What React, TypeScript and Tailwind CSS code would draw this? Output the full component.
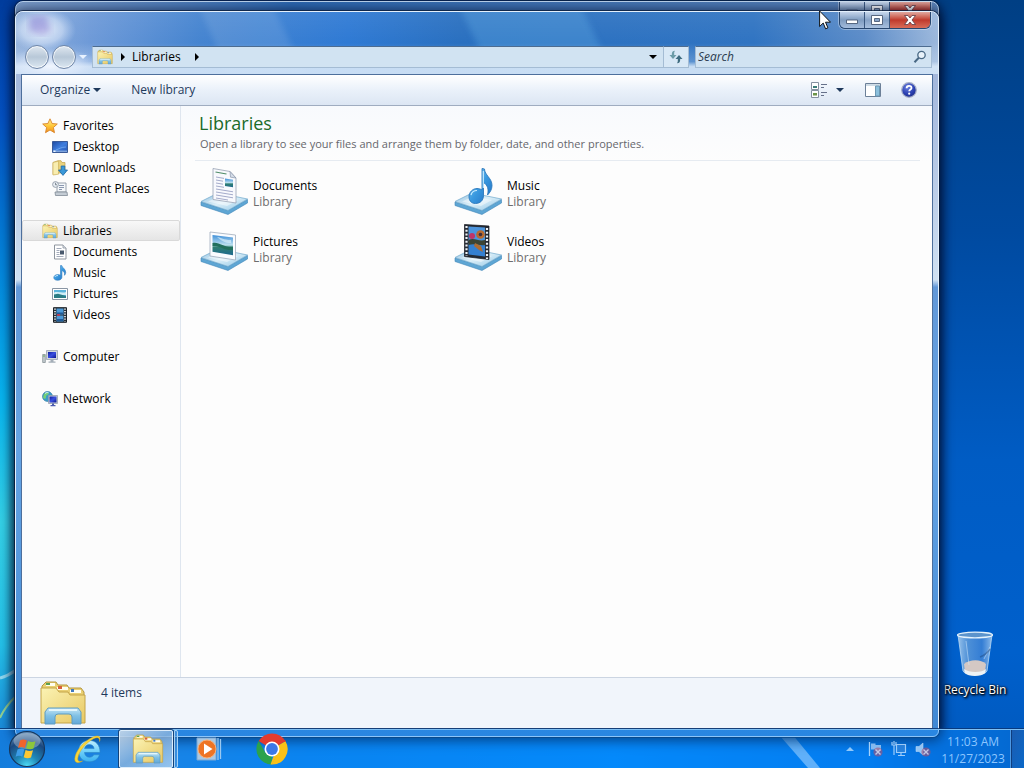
import React, { useState } from "react";

type IconProps = { className?: string };

type NavEntry = {
  label: string;
  icon: React.FC<IconProps>;
  child?: boolean;
};

type LibraryEntry = {
  label: string;
  icon: React.FC<IconProps>;
};

// gradients shared by every icon on the page
const SharedGradients = () => (
  <svg width="0" height="0" className="absolute" aria-hidden="true">
    <defs>
      <linearGradient id="g-folder" x1="0" y1="0" x2="1" y2="1">
        <stop offset="0" stopColor="#fbf3b4" />
        <stop offset="1" stopColor="#e8c862" />
      </linearGradient>
      <linearGradient id="g-stand" x1="0" y1="0" x2="0" y2="1">
        <stop offset="0" stopColor="#c4e6f6" />
        <stop offset="0.5" stopColor="#7fc0e4" />
        <stop offset="1" stopColor="#63a8d8" />
      </linearGradient>
      <linearGradient id="g-plate" x1="0" y1="0" x2="1" y2="1">
        <stop offset="0" stopColor="#8fbfe0" />
        <stop offset="0.5" stopColor="#dceff8" />
        <stop offset="1" stopColor="#8cc4e6" />
      </linearGradient>
      <linearGradient id="g-note" x1="0" y1="0" x2="1" y2="1">
        <stop offset="0" stopColor="#9ad6f8" />
        <stop offset="0.5" stopColor="#3a9ae0" />
        <stop offset="1" stopColor="#1f6cc0" />
      </linearGradient>
      <linearGradient id="g-photo" x1="0" y1="0" x2="0" y2="1">
        <stop offset="0" stopColor="#3f8fd8" />
        <stop offset="0.5" stopColor="#bfe2f0" />
        <stop offset="0.6" stopColor="#2f7f70" />
        <stop offset="1" stopColor="#1f6a90" />
      </linearGradient>
      <linearGradient id="g-screen" x1="0" y1="0" x2="1" y2="1">
        <stop offset="0" stopColor="#0c1ca0" />
        <stop offset="0.5" stopColor="#3a50e0" />
        <stop offset="1" stopColor="#0a1490" />
      </linearGradient>
      <linearGradient id="g-desk" x1="0" y1="0" x2="1" y2="1">
        <stop offset="0" stopColor="#1c48a0" />
        <stop offset="0.5" stopColor="#3f7ede" />
        <stop offset="1" stopColor="#2454b4" />
      </linearGradient>
      <linearGradient id="g-star" x1="0" y1="0" x2="0" y2="1">
        <stop offset="0" stopColor="#fff3a0" />
        <stop offset="0.5" stopColor="#ffc93a" />
        <stop offset="1" stopColor="#f09020" />
      </linearGradient>
      <radialGradient id="g-help" cx="0.4" cy="0.3" r="0.8">
        <stop offset="0" stopColor="#6a80e0" />
        <stop offset="0.6" stopColor="#2a3fb0" />
        <stop offset="1" stopColor="#1c2a80" />
      </radialGradient>
      <radialGradient id="g-orb" cx="0.5" cy="1" r="0.95">
        <stop offset="0" stopColor="#4fe0f8" />
        <stop offset="0.35" stopColor="#1f88b8" />
        <stop offset="0.75" stopColor="#1a4880" />
        <stop offset="1" stopColor="#5f88b0" />
      </radialGradient>
      <linearGradient id="g-ie" x1="0" y1="0" x2="0" y2="1">
        <stop offset="0" stopColor="#c4f0ff" />
        <stop offset="0.5" stopColor="#6fd0fa" />
        <stop offset="1" stopColor="#3ab0f0" />
      </linearGradient>
      <linearGradient id="g-bin" x1="0" y1="0" x2="1" y2="0">
        <stop offset="0" stopColor="#b4d4f0" stopOpacity="0.85" />
        <stop offset="0.3" stopColor="#6ea4dc" stopOpacity="0.7" />
        <stop offset="0.7" stopColor="#4a8ad8" stopOpacity="0.7" />
        <stop offset="1" stopColor="#a8ccf0" stopOpacity="0.85" />
      </linearGradient>
    </defs>
  </svg>
);

const LibrariesIcon: React.FC<IconProps> = ({ className }) => (
  <svg viewBox="0 0 48 46" className={className} aria-hidden="true">
    <path d="M3 6l4-4h10l2 3h9l2 3h12l3 4v30H3z" fill="#e9cf72" stroke="#b59740" />
    <path d="M7 3h9v3H7zM18 7h11v3H18zM31 10h11v3H31z" fill="#fffef0" />
    <path d="M7 3h4v2H7z" fill="#5aa050" />
    <path d="M19 6h4v3h-4z" fill="#d8603a" />
    <path d="M32 9h3v3h-3z" fill="#3f78c0" />
    <path d="M2 8h15l3 4h9l2 3h15v28H2z" fill="url(#g-folder)" stroke="#c4a448" />
    <path
      d="M9 28h30l3 4v12h-9v-7q0-3-3-3H19q-3 0-3 3v7H6V32z"
      fill="url(#g-stand)"
      stroke="#5f9cc0"
    />
    <path d="M10 30h28" stroke="#e4f6fc" strokeWidth="2" />
  </svg>
);

const StarIcon: React.FC<IconProps> = ({ className }) => (
  <svg viewBox="0 0 16 16" className={className} aria-hidden="true">
    <path
      d="M8 .8l2.1 4.7 5.2.5-3.9 3.5 1.1 5.2L8 12l-4.5 2.7 1.1-5.2L.7 6l5.2-.5z"
      fill="url(#g-star)"
      stroke="#d8842a"
      strokeWidth="0.9"
      strokeLinejoin="round"
    />
  </svg>
);

const DesktopIcon: React.FC<IconProps> = ({ className }) => (
  <svg viewBox="0 0 16 16" className={className} aria-hidden="true">
    <path d="M.5 2.5h15v11H.5z" fill="url(#g-desk)" stroke="#3a5a98" />
    <path d="M1 11.5h14v1.5H1z" fill="#7fa4dc" />
    <path d="M1.5 11.5h2v1.5h-2z" fill="#e8f4ff" />
    <path d="M4 11c3-1 5-3 10-3" stroke="#7fb4f4" strokeWidth="0.7" fill="none" />
  </svg>
);

const DownloadsIcon: React.FC<IconProps> = ({ className }) => (
  <svg viewBox="0 0 16 16" className={className} aria-hidden="true">
    <path d="M1 2.5L6 .7h3l1 1.8h3V13H6l-5 1.5z" fill="#ead27c" stroke="#c0a04a" strokeWidth="0.7" />
    <path d="M1 2.5l5.5-1.3v13L1 15z" fill="#f8edb0" stroke="#c9ab52" strokeWidth="0.6" />
    <path d="M9.2 6h3.6v4h2.7L11 15.4 6.500 10h2.700z" fill="#3a98d8" stroke="#1c68a8" strokeWidth="0.8" />
  </svg>
);

const RecentIcon: React.FC<IconProps> = ({ className }) => (
  <svg viewBox="0 0 16 16" className={className} aria-hidden="true">
    <path d="M5 2h9v9H5z" fill="#f4f7fa" stroke="#8e99a6" strokeWidth="0.9" />
    <path d="M7 4.5h5M7 6.5h5M7 8.5h3" stroke="#8a98b0" />
    <path d="M3 11h12l.5 3.5h-12z" fill="#c4ccd4" stroke="#808a96" strokeWidth="0.8" />
    <circle cx="3.5" cy="3.5" r="2.9" fill="#e8eef4" stroke="#8e99a6" strokeWidth="0.9" />
    <path d="M3.5 1.8v2h1.5" stroke="#55606c" strokeWidth="0.7" fill="none" />
  </svg>
);

const DocumentIcon: React.FC<IconProps> = ({ className }) => (
  <svg viewBox="0 0 16 16" className={className} aria-hidden="true">
    <path d="M2.5 1h8.500l3 3v11H2.500z" fill="#fff" stroke="#8e959e" />
    <path d="M11 1v3h3" fill="#dce2ea" stroke="#8e959e" strokeWidth="0.8" />
    <path d="M4.500 4.500h5M4.500 6.500h3M4.500 8.500h3M4.500 10.500h3M4.500 12.500h7" stroke="#8c96a8" strokeWidth="0.8" />
    <path d="M8 6.500h4v4H8z" fill="#48586c" />
  </svg>
);

const MusicIcon: React.FC<IconProps> = ({ className }) => (
  <svg viewBox="0 0 16 16" className={className} aria-hidden="true">
    <path
      d="M8.500.5h1.200c.6 2.500 4 3.500 4 6.800 0 1.500-.6 2.400-1.200 3 .3-2.600-.6-4-2.600-4.800v6.700c0 1.800-1.800 3.100-4.200 3.100S1.800 14.300 1.800 12.500s1.900-2.900 4-2.900c1 0 1.900.2 2.700.7z"
      fill="url(#g-note)"
      stroke="#2f7cc0"
      strokeWidth="0.6"
    />
    <path d="M3 11.800c.6-1 1.800-1.300 3-1.200" stroke="#d8f2ff" fill="none" />
  </svg>
);

const PictureIcon: React.FC<IconProps> = ({ className }) => (
  <svg viewBox="0 0 16 16" className={className} aria-hidden="true">
    <path d="M.5 2.500h15v11H.5z" fill="#fff" stroke="#8a96a4" />
    <path d="M2 4h12v8H2z" fill="#5ab4dc" />
    <path d="M2 6.500c4-1.500 8 1 12-.5v3H2z" fill="#d0eef6" />
    <path d="M2 8.500l4-.8 8 2.300v2H2z" fill="#2a7c84" />
  </svg>
);

const VideoIcon: React.FC<IconProps> = ({ className }) => (
  <svg viewBox="0 0 16 16" className={className} aria-hidden="true">
    <path d="M1.500.7h13v14.600h-13z" fill="#283038" stroke="#1c2228" />
    <path d="M4.500 1.500h7v6h-7zM4.500 8.500h7v6h-7z" fill="#4c9ad8" />
    <path d="M5 5.500h6v1.800H5zM5 12h6v2H5z" fill="#1f5a98" />
    <path d="M5 7h3v2H5z" fill="#b0405a" />
    <path d="M3 1.500v13M13 1.500v13" stroke="#f0f4f8" strokeWidth="1.6" strokeDasharray="1.3 1.2" />
  </svg>
);

const ComputerIcon: React.FC<IconProps> = ({ className }) => (
  <svg viewBox="0 0 16 16" className={className} aria-hidden="true">
    <path d="M.7 5.500h2.600v8H.7z" fill="#c4ccd0" stroke="#7c868c" strokeWidth="0.7" />
    <path d="M1.200 7h1.600" stroke="#58a848" />
    <path d="M4.500 1.500h11v9h-11z" fill="#d0d6de" stroke="#98a2ae" strokeWidth="0.8" />
    <path d="M6 3h8v6H6z" fill="url(#g-screen)" />
    <path d="M8.500 11h3v1.500h2v1.200h-7v-1.200h2z" fill="#a4aeb8" />
  </svg>
);

const NetworkIcon: React.FC<IconProps> = ({ className }) => (
  <svg viewBox="0 0 16 16" className={className} aria-hidden="true">
    <circle cx="5.5" cy="5.5" r="5" fill="#3c9cc8" stroke="#2874a0" strokeWidth="0.6" />
    <path d="M2 3c2-2 4-1.500 5-.5-1 2-3 1-3 3.500S2 8 1 6.500z" fill="#74d078" />
    <path d="M3 2.500c1-1 2.500-1.200 3.500-.8" stroke="#e8fcff" fill="none" />
    <path d="M6.500 4.500h9v8h-9z" fill="#c8d0dc" stroke="#8e98a8" strokeWidth="0.7" />
    <path d="M7.500 5.500h7v6h-7z" fill="url(#g-screen)" />
    <path d="M10 12.500h2v1.500h1.500v1.200h-5V14H10z" fill="#4c5cb0" />
  </svg>
);

const Plate = () => (
  <>
    <path d="M1 35v3.500l27 9L47.500 36v-3.500L28 43.500z" fill="#5ea6d4" stroke="#3f86b8" strokeWidth="0.6" />
    <path d="M1 34.500L18 26l29.500 6L28 43.500z" fill="url(#g-plate)" stroke="#6fa8cc" strokeWidth="0.7" />
    <path d="M8 34.500L20 29l18 4-11 6z" fill="#fff" opacity="0.45" />
  </>
);

const DocumentsLibraryIcon: React.FC<IconProps> = ({ className }) => (
  <svg viewBox="0 1 48 48" className={className} aria-hidden="true">
    <Plate />
    <path d="M13 1.500l17 3 6 6.500v25l-23-3.500z" fill="#f8f9fd" stroke="#98a2b4" strokeWidth="0.8" />
    <path d="M30 4.500l6 6.500-5.500-.8z" fill="#d4dce8" stroke="#8c98ac" strokeWidth="0.7" />
    <path d="M15.500 5l11 2" stroke="#4f8c68" strokeWidth="1.2" />
    <path
      d="M16 10l8 1.400M16 13l7 1.200M16 16l7 1.200M16 19l8 1.300M16 22l17 2.800M16 25l17 2.800M16 28l17 2.800M16 31l12 2"
      stroke="#9aa2c4"
      strokeWidth="0.9"
    />
    <path d="M25 11.500l8 1.300v7.500l-8-1.300z" fill="url(#g-photo)" />
  </svg>
);

const MusicLibraryIcon: React.FC<IconProps> = ({ className }) => (
  <svg viewBox="0 1 48 48" className={className} aria-hidden="true">
    <Plate />
    <path
      d="M28 1.500l2.500.5c0 6 7.500 9 7.500 16.500 0 4-2 7-4.500 9.500 1.500-6 0-10-4-12.500v13c0 5-3.500 8-8 8s-6.500-3-6.500-7 3.500-8 8-8c2 0 3.500.5 5 1.500z"
      fill="url(#g-note)"
      stroke="#2b78bc"
      strokeWidth="0.9"
    />
    <path d="M17 28c.8-3 3-4.500 6-4.500M29.300 4v17" stroke="#c8ecff" strokeWidth="1.2" fill="none" />
  </svg>
);

const PicturesLibraryIcon: React.FC<IconProps> = ({ className }) => (
  <svg viewBox="0 1 48 48" className={className} aria-hidden="true">
    <Plate />
    <path d="M10 9l25.500 3v25L10 33z" fill="#fafcff" stroke="#a0acbc" strokeWidth="0.8" />
    <path d="M12.500 12l20.500 2.600v17.600l-20.500-3.400z" fill="url(#g-photo)" />
    <path d="M12.500 20c6-2 12 5 20.500 4v3c-8 1-14-5-20.500-4z" fill="#22705c" />
    <path d="M17 14c5 .5 6 3 14 3v3c-6 0-9-2-14-6z" fill="#d6eefa" opacity="0.7" />
  </svg>
);

const VideosLibraryIcon: React.FC<IconProps> = ({ className }) => (
  <svg viewBox="0 1 48 48" className={className} aria-hidden="true">
    <Plate />
    <path d="M10.500 1.500L35 3v33.500l-24.500-3z" fill="#262b34" stroke="#12161c" strokeWidth="0.7" />
    <path d="M14.500 3.500L31 4.500v14.800l-16.500-1z" fill="#4c94dc" />
    <path d="M14.500 20L31 21v12.500l-16.500-2z" fill="#3580d0" />
    <path d="M12.500 3v30M33 5v31" stroke="#eef2f6" strokeWidth="2.2" strokeDasharray="2 1.7" />
    <circle cx="18" cy="13" r="3" fill="#c03468" />
    <circle cx="26.5" cy="11.5" r="4.3" fill="#b86a30" />
    <circle cx="26.5" cy="11.5" r="1.8" fill="#40303c" />
    <path d="M14.500 17c6-3 10 2 16.500 0v5c-6 1-10-2-16.500 0z" fill="#3c4434" />
    <path d="M21 20l6 3 2 6-4-2-5-4z" fill="#ac6c34" />
  </svg>
);

const ChangeViewIcon: React.FC<IconProps> = ({ className }) => (
  <svg viewBox="0 0 18 16" className={className} aria-hidden="true">
    <path d="M1.500.5h7v7h-7zM1.500 8.500h7v7h-7z" fill="#fff" stroke="#8490a0" />
    <path d="M3 4h4v2H3z" fill="#3a7c78" />
    <path d="M3 11h4v2.500H3z" fill="#6c9448" />
    <path d="M11 2.500h6M11 5.500h3M11 10.500h6M11 13.500h3" stroke="#66718a" />
  </svg>
);

const PreviewPaneIcon: React.FC<IconProps> = ({ className }) => (
  <svg viewBox="0 0 16 14" className={className} aria-hidden="true">
    <path d="M.5.5h15v13H.5z" fill="#fff" stroke="#6c8098" />
    <path d="M1 2h14" stroke="#9eb8cc" />
    <path d="M10.500 3h4v10h-4z" fill="#8cc0dc" stroke="#6c98b4" />
  </svg>
);

const HelpIcon: React.FC<IconProps> = ({ className }) => (
  <svg viewBox="0 0 16 16" className={className} aria-hidden="true">
    <circle cx="8" cy="8" r="7.3" fill="url(#g-help)" stroke="#a8b0c8" strokeWidth="1.2" />
    <path d="M5.600 6.200c0-3.200 4.900-3.100 4.900-.3 0 1.600-2.300 1.700-2.300 3.400" stroke="#fff" strokeWidth="1.8" fill="none" />
    <circle cx="8.2" cy="11.7" r="1.1" fill="#fff" />
  </svg>
);

const SearchIcon: React.FC<IconProps> = ({ className }) => (
  <svg viewBox="0 0 14 14" className={className} aria-hidden="true">
    <circle cx="8.5" cy="5" r="3.7" fill="#e8f2fa" stroke="#486884" strokeWidth="1.3" />
    <path d="M5.800 7.800L1.500 12.300" stroke="#486884" strokeWidth="2" />
  </svg>
);

const RefreshIcon: React.FC<IconProps> = ({ className }) => (
  <svg viewBox="0 0 16 14" className={className} aria-hidden="true">
    <path d="M7 .8C4.500.8 3.800 2 3.800 5H1.500L5 9l3.500-4H6.200C6.200 3 6 2 7 .8z" fill="#6c9ca8" />
    <path d="M9 13.200c2.500 0 3.200-1.200 3.200-4.200h2.300L11 5 7.500 9h2.300c0 2 .2 3-.8 4.200z" fill="#3f6c80" />
  </svg>
);

const DownArrow: React.FC<IconProps> = ({ className }) => (
  <svg viewBox="0 0 8 4" className={className} aria-hidden="true">
    <path d="M0 0h8L4 4z" fill="currentColor" />
  </svg>
);

const RightArrow: React.FC<IconProps> = ({ className }) => (
  <svg viewBox="0 0 4 8" className={className} aria-hidden="true">
    <path d="M0 0v8l4-4z" fill="currentColor" />
  </svg>
);

const StartOrb: React.FC<IconProps> = ({ className }) => (
  <svg viewBox="0 0 38 38" className={className} aria-hidden="true">
    <circle cx="19" cy="19" r="17.5" fill="url(#g-orb)" stroke="#16365c" strokeWidth="1.2" />
    <ellipse cx="19" cy="11" rx="13.5" ry="8" fill="#fff" opacity="0.3" />
    <path d="M12 10.500c2.500-1.500 4.500-1.200 6.800 0l-2 7.500c-2.500-1.300-4.300-1.200-6.800 0z" fill="#f0642c" />
    <path d="M20 11c2.500 1.200 5 1.300 7.500.2l-2 7.300c-2.500 1.200-4.800 1-7.400-.2z" fill="#8cc63c" />
    <path d="M9.500 19.500c2.500-1.200 4.500-1.200 6.800 0l-2 7.200c-2.300-1.300-4.300-1.200-6.700 0z" fill="#3c9ce8" />
    <path d="M17.600 20c2.600 1.300 5 1.300 7.400.2l-2 7.300c-2.400 1-4.800 1-7.300-.3z" fill="#fcc834" />
  </svg>
);

const ExplorerE: React.FC<IconProps> = ({ className }) => (
  <svg viewBox="0 0 32 32" className={className} aria-hidden="true">
    <path
      d="M28 19.500H12.500c.3 3 2.300 4.700 5 4.700 2 0 3.500-.8 4.300-2.400h5.700c-1.500 4.500-5.300 7-10.200 7-6.500 0-10.700-4.300-10.700-10.600S10.900 7.500 17.400 7.500 28.200 12 28 19.500zM12.600 15.600h9.500c-.3-2.600-2.200-4-4.700-4s-4.300 1.500-4.800 4z"
      fill="url(#g-ie)"
      stroke="#2a84c4"
      strokeWidth="0.6"
    />
    <path
      d="M27.500 8.500C29.500 3 26 1.800 20.500 4.300 12 8 3 18.500 2.800 25.800 2.700 30 6 30.800 10.500 28c-3.200 1-5.200.3-4.700-3C6.700 18.500 14 9.500 21.500 5.700c4-2 6.700-1.200 6 2.800z"
      fill="#f7d63c"
      stroke="#d8a820"
      strokeWidth="0.5"
    />
  </svg>
);

const MediaPlayerIcon: React.FC<IconProps> = ({ className }) => (
  <svg viewBox="0 0 26 24" className={className} aria-hidden="true">
    <path d="M1 1h19v22H1z" fill="#a8c8e4" stroke="#7aa8d4" />
    <path d="M22 1v22M24.500 2v20" stroke="#9ac8f0" strokeWidth="1.3" />
    <circle cx="11" cy="12" r="9" fill="#ee7424" stroke="#f8b078" />
    <path d="M8 6.500l8.500 5.500L8 17.500z" fill="#fff" />
  </svg>
);

const ChromeIcon: React.FC<IconProps> = ({ className }) => (
  <svg viewBox="0 0 32 32" className={className} aria-hidden="true">
    <path d="M16 16L2.600 8A15.600 15.600 0 0 1 29.500 8.200z" fill="#e33b2e" />
    <path d="M16 16L29.500 8.200A15.600 15.600 0 0 1 15.700 31.600L22 19z" fill="#fbc116" />
    <path d="M16 16l-.3 15.600A15.600 15.600 0 0 1 2.600 8l7 12z" fill="#2ba24c" />
    <path d="M16 8.700h13.800a15.600 15.600 0 0 0-.8-1.600z" fill="#e33b2e" />
    <path d="M22.300 19.700L16 31.600l-1.500 0 3-8.400z" fill="#fbc116" />
    <circle cx="16" cy="16" r="7.5" fill="#fff" />
    <circle cx="16" cy="16" r="5.9" fill="#3b78e7" />
  </svg>
);

const RecycleBinIcon: React.FC<IconProps> = ({ className }) => (
  <svg viewBox="0 0 38 46" className={className} aria-hidden="true">
    <path d="M2 4l5 36c2 5 22 5 24 0l5-36z" fill="url(#g-bin)" stroke="#b8d8f4" strokeWidth="0.8" />
    <path d="M8 33c6-5 17-5 22 0l-1 8c-4 4-17 4-20 0z" fill="#d4c8c4" />
    <path d="M8 38c5 4 18 4 22 0l-.7 4c-4 4-17 4-20.600 0z" fill="#eef2f4" />
    <path d="M10 10l3 24M28 28l6-12" stroke="#d8ecfc" opacity="0.5" />
    <path d="M24 26q6-2 10-8" stroke="#204c84" strokeWidth="1.5" fill="none" opacity="0.5" />
    <ellipse cx="19" cy="4" rx="17.5" ry="2.8" fill="#5c94cc" stroke="#e4f2fc" strokeWidth="1.3" />
  </svg>
);

const RedX = () => (
  <>
    <circle cx="11" cy="11" r="4.6" fill="#d04858" opacity="0.6" />
    <path d="M8.500 8.500l5 5M13.500 8.500l-5 5" stroke="#f4dce4" strokeWidth="1.4" />
  </>
);

const ActionCenterIcon: React.FC<IconProps> = ({ className }) => (
  <svg viewBox="0 0 16 16" className={className} aria-hidden="true">
    <path d="M2.500 1v14" stroke="#cfe8ff" strokeWidth="1.3" />
    <path d="M4 2.500h4.500v1.500h5.500v6H8.500V8.500H4z" fill="#a4ccf4" />
    <RedX />
  </svg>
);

const NetworkTrayIcon: React.FC<IconProps> = ({ className }) => (
  <svg viewBox="0 0 16 16" className={className} aria-hidden="true">
    <path d="M5.500 3.500h9v8h-9z" fill="#2f84dc" stroke="#c4e2ff" strokeWidth="1.2" />
    <path d="M10 12v2M7 14.500h7M1 1v3h4V1M3 0v3M3 4v10" stroke="#c4e2ff" strokeWidth="1.2" fill="none" />
  </svg>
);

const VolumeIcon: React.FC<IconProps> = ({ className }) => (
  <svg viewBox="0 0 16 16" className={className} aria-hidden="true">
    <path d="M1 5.500h3L8 2v12l-4-3.500H1z" fill="#b8dafa" stroke="#d8ecff" strokeWidth="0.6" />
    <RedX />
  </svg>
);

const Wallpaper = () => (
  <svg viewBox="0 0 1024 768" preserveAspectRatio="none" className="absolute inset-0 size-full" aria-hidden="true">
    <defs>
      <linearGradient id="w-left" x1="0" y1="0" x2="0" y2="1">
        <stop offset="0" stopColor="#003c9c" />
        <stop offset="0.15" stopColor="#0450c0" />
        <stop offset="0.36" stopColor="#0488dc" />
        <stop offset="0.52" stopColor="#08b4ee" />
        <stop offset="0.68" stopColor="#34d0e6" />
        <stop offset="0.84" stopColor="#24c0e8" />
        <stop offset="0.95" stopColor="#1a8ad8" />
        <stop offset="1" stopColor="#1878d0" />
      </linearGradient>
      <linearGradient id="w-right" x1="0" y1="0" x2="0" y2="1">
        <stop offset="0" stopColor="#003f84" />
        <stop offset="0.3" stopColor="#004aa0" />
        <stop offset="0.6" stopColor="#005cc4" />
        <stop offset="0.85" stopColor="#0060cc" />
        <stop offset="1" stopColor="#0058bc" />
      </linearGradient>
      <linearGradient id="w-floor" x1="0" y1="0" x2="1" y2="0">
        <stop offset="0" stopColor="#1c78cc" />
        <stop offset="0.12" stopColor="#2a84d8" />
        <stop offset="0.3" stopColor="#0a84ee" />
        <stop offset="0.6" stopColor="#008cff" />
        <stop offset="0.85" stopColor="#0078ec" />
        <stop offset="0.92" stopColor="#0064d0" />
        <stop offset="1" stopColor="#0056b8" />
      </linearGradient>
    </defs>
    <rect width="512" height="768" fill="url(#w-left)" />
    <rect x="512" width="512" height="768" fill="url(#w-right)" />
    <rect y="729" width="1024" height="39" fill="url(#w-floor)" />
    <path d="M0 678q8-2 16-8" stroke="#c0ecf8" strokeWidth="3" fill="none" opacity="0.7" />
    <path d="M0 718q4-10 16-22" stroke="#b0e080" strokeWidth="2" fill="none" opacity="0.8" />
    <path d="M774 729l14 0 32 39h-12z" fill="#b4dcff" opacity="0.85" />
  </svg>
);

// streaked glass behind the title and address rows
const Glass = () => (
  <svg viewBox="0 0 922 62" preserveAspectRatio="none" className="absolute inset-0 size-full" aria-hidden="true">
    <defs>
      <linearGradient id="t-base" x1="0" y1="0" x2="1" y2="0">
        <stop offset="0" stopColor="#94b2dc" />
        <stop offset="0.08" stopColor="#6e9ad8" />
        <stop offset="0.2" stopColor="#4584d0" />
        <stop offset="0.36" stopColor="#2f7ad4" />
        <stop offset="0.48" stopColor="#2a70c0" />
        <stop offset="0.8" stopColor="#3074c2" />
        <stop offset="0.92" stopColor="#5c8cc8" />
        <stop offset="1" stopColor="#9cb8dc" />
      </linearGradient>
      <linearGradient id="t-fade" x1="0" y1="0" x2="0" y2="1">
        <stop offset="0" stopColor="#fff" stopOpacity="0.06" />
        <stop offset="0.5" stopColor="#fff" stopOpacity="0" />
        <stop offset="0.8" stopColor="#e4f0fc" stopOpacity="0.25" />
        <stop offset="0.88" stopColor="#d8e8f8" stopOpacity="0.9" />
        <stop offset="1" stopColor="#cfe2f6" stopOpacity="0.95" />
      </linearGradient>
      <radialGradient id="t-glow">
        <stop offset="0" stopColor="#f4f8ff" stopOpacity="0.9" />
        <stop offset="0.6" stopColor="#dce8fa" stopOpacity="0.6" />
        <stop offset="1" stopColor="#c4d8f4" stopOpacity="0" />
      </radialGradient>
      <filter id="t-soft">
        <feGaussianBlur stdDeviation="3" />
      </filter>
    </defs>
    <rect width="922" height="62" fill="url(#t-base)" />
    <path d="M182-8h74l38 80h-78z" fill="#fff" opacity="0.1" filter="url(#t-soft)" />
    <path d="M442-8h122l38 80H480z" fill="#5aa4e0" opacity="0.38" filter="url(#t-soft)" />
    <rect width="922" height="62" fill="url(#t-fade)" />
    <ellipse cx="26" cy="18" rx="34" ry="22" fill="url(#t-glow)" />
    <ellipse cx="34" cy="54" rx="52" ry="18" fill="url(#t-glow)" />
    <path d="M14 4h16l5 15-9 4-13-4z" fill="#8a84d4" opacity="0.6" filter="url(#t-soft)" />
  </svg>
);

const CaptionButtons = () => (
  <div className="relative flex h-[17px] overflow-hidden rounded-b-md border border-t-0 border-[#27466e] shadow-[0_0_0_1px_rgba(255,255,255,0.35)]">
    <button
      type="button"
      aria-label="Minimize"
      className="flex w-6 items-center justify-center bg-linear-to-b from-[#c4d4ea] via-[#7f9cc0] to-[#a4bcdc]"
    >
      <svg viewBox="0 0 12 6" className="mt-1 h-[6px] w-3" aria-hidden="true">
        <path d="M.5 1h11v3.500H.5z" fill="#fff" stroke="#4a5a74" strokeWidth="0.9" />
      </svg>
    </button>
    <button
      type="button"
      aria-label="Maximize"
      className="flex w-[26px] items-center justify-center border-x border-[#3a5880] bg-linear-to-b from-[#c8d8ec] via-[#86a2c6] to-[#a8c0de]"
    >
      <svg viewBox="0 0 12 10" className="h-[10px] w-3" aria-hidden="true">
        <path d="M.5.5h11v9H.5zM3.500 3.500v3h5v-3z" fill="#fff" fillRule="evenodd" stroke="#4a5a74" strokeWidth="0.9" />
      </svg>
    </button>
    <button
      type="button"
      aria-label="Close"
      className="flex w-10 items-center justify-center bg-linear-to-b from-[#e0a8a0] via-[#c0392c] to-[#d86c58]"
    >
      <svg viewBox="0 0 12 10" className="h-[10px] w-3" aria-hidden="true">
        <path d="M.5.5H4L6 3 8 .5h3.500L8 5l3.500 4.500H8L6 7 4 9.500H.5L4 5z" fill="#fff" stroke="#5c3a44" strokeWidth="0.8" />
      </svg>
    </button>
  </div>
);

const navGroups: NavEntry[][] = [
  [
    { label: "Favorites", icon: StarIcon },
    { label: "Desktop", icon: DesktopIcon, child: true },
    { label: "Downloads", icon: DownloadsIcon, child: true },
    { label: "Recent Places", icon: RecentIcon, child: true },
  ],
  [
    { label: "Libraries", icon: LibrariesIcon },
    { label: "Documents", icon: DocumentIcon, child: true },
    { label: "Music", icon: MusicIcon, child: true },
    { label: "Pictures", icon: PictureIcon, child: true },
    { label: "Videos", icon: VideoIcon, child: true },
  ],
  [{ label: "Computer", icon: ComputerIcon }],
  [{ label: "Network", icon: NetworkIcon }],
];

const libraries: LibraryEntry[] = [
  { label: "Documents", icon: DocumentsLibraryIcon },
  { label: "Music", icon: MusicLibraryIcon },
  { label: "Pictures", icon: PicturesLibraryIcon },
  { label: "Videos", icon: VideosLibraryIcon },
];

const AddressRow = () => {
  const [query, setQuery] = useState("");

  return (
    <div className="relative flex h-[22px] items-stretch">
      <div className="flex w-[70px] shrink-0 items-center gap-[3px] pl-[3px]">
        <button
          type="button"
          aria-label="Back"
          className="size-6 shrink-0 rounded-full border border-[#6f86a8] bg-linear-to-b from-[#dfe7f0] via-[#b8c8d8] to-[#dce8f2] shadow-[inset_0_0_0_1px_rgba(255,255,255,0.7)]"
        />
        <button
          type="button"
          aria-label="Forward"
          className="size-6 shrink-0 rounded-full border border-[#6f86a8] bg-linear-to-b from-[#dfe7f0] via-[#b8c8d8] to-[#dce8f2] shadow-[inset_0_0_0_1px_rgba(255,255,255,0.7)]"
        />
        <button type="button" aria-label="Recent pages" className="text-[#e8f2ff]">
          <DownArrow className="h-1 w-2" />
        </button>
      </div>
      <div className="flex min-w-0 flex-1 items-center border border-[#a4bcd4] border-t-[#4d6c90] bg-[#d1e3f2] pr-[6px] pl-1">
        <LibrariesIcon className="size-4 shrink-0" />
        <RightArrow className="ml-2 h-2 w-1 shrink-0" />
        <a href="#libraries" className="ml-[7px] font-medium text-black">
          Libraries
        </a>
        <RightArrow className="ml-[14px] h-2 w-1 shrink-0" />
        <button type="button" aria-label="Previous locations" className="ml-auto">
          <DownArrow className="h-1 w-2" />
        </button>
      </div>
      <button
        type="button"
        aria-label="Refresh"
        className="flex w-[25px] shrink-0 items-center justify-center border border-l-0 border-[#a4bcd4] border-t-[#4d6c90] bg-[#d8e8f6]"
      >
        <RefreshIcon className="h-[14px] w-4" />
      </button>
      <div className="ml-[6px] flex w-[237px] shrink-0 items-center border border-[#a4bcd4] border-t-[#4d6c90] bg-[#d1e3f2] pr-1">
        <input
          type="text"
          aria-label="Search"
          placeholder="Search"
          value={query}
          onChange={(event) => setQuery(event.target.value)}
          className="min-w-0 flex-1 bg-transparent px-[2px] italic outline-none placeholder:text-[#2c3c50]"
        />
        <button type="button" aria-label="Start search">
          <SearchIcon className="size-[14px]" />
        </button>
      </div>
    </div>
  );
};

const Toolbar = () => (
  <div className="flex h-[31px] shrink-0 items-center border-b border-[#9facc0] bg-linear-to-b from-white via-[#eaf1fa] via-50% to-[#dce6f3] pr-[15px] pl-[18px] text-[#1e395b]">
    <button type="button" className="flex items-center gap-[3px]">
      Organize
      <DownArrow className="h-1 w-2" />
    </button>
    <button type="button" className="ml-[30px]">
      New library
    </button>
    <div className="ml-auto flex items-center">
      <button type="button" aria-label="Change your view">
        <ChangeViewIcon className="h-4 w-[18px]" />
      </button>
      <button type="button" aria-label="More view options" className="ml-2">
        <DownArrow className="h-1 w-2" />
      </button>
      <button type="button" aria-label="Show the preview pane" className="ml-[21px]">
        <PreviewPaneIcon className="h-[14px] w-4" />
      </button>
      <button type="button" aria-label="Get help" className="ml-5">
        <HelpIcon className="size-4" />
      </button>
    </div>
  </div>
);

const NavigationPane = () => (
  <nav className="flex w-[159px] shrink-0 flex-col gap-[21px] overflow-hidden border-r border-[#dfe6ef] bg-[#fcfcfc] pt-[9px]">
    {navGroups.map((group) => (
      <ul key={group[0].label}>
        {group.map(({ label, icon: Icon, child }) => (
          <li key={label}>
            <a
              href={`#${label.toLowerCase().replace(" ", "-")}`}
              className={`flex h-[21px] items-center gap-[5px] rounded-xs border ${child ? "pl-[29px]" : "pl-[19px]"} ${
                label === "Libraries"
                  ? "border-[#d9d9d9] bg-linear-to-b from-[#f8f8f8] to-[#e5e5e5]"
                  : "border-transparent"
              }`}
            >
              <Icon className="size-4 shrink-0" />
              <span className="whitespace-nowrap">{label}</span>
            </a>
          </li>
        ))}
      </ul>
    ))}
  </nav>
);

const LibraryPane = () => (
  <main className="min-w-0 flex-1 overflow-hidden bg-[#fdfdfd] bg-linear-to-b from-[#f8fafd] to-[#fdfdfd] to-10% pl-[14px]">
    <header className="mr-3 border-b border-[#e6ebf1] pt-[5px] pb-[8px] pl-1">
      <h1 className="text-[18px] leading-6 text-[#1c6b2a]">Libraries</h1>
      <p className="pl-px text-[11px] leading-[17px] whitespace-nowrap text-[#66666c]">
        Open a library to see your files and arrange them by folder, date, and other properties.
      </p>
    </header>
    <ul className="grid grid-cols-[repeat(auto-fill,254px)] gap-y-2 pt-[7px] pl-[5px]">
      {libraries.map(({ label, icon: Icon }, index) => (
        <li key={label} className={index % 2 === 0 ? "col-start-1" : "col-start-2"}>
          <a href={`#library-${label.toLowerCase()}`} className="flex items-center gap-[5px]">
            <Icon className="size-12 shrink-0" />
            <span className="flex flex-col pt-[3px] leading-4">
              <span className="text-black">{label}</span>
              <span className="text-[#6d6d6d]">Library</span>
            </span>
          </a>
        </li>
      ))}
    </ul>
  </main>
);

const ExplorerWindow = () => (
  <section
    aria-label="Libraries"
    className="absolute top-[11px] right-[85px] bottom-[31px] left-[15px] flex flex-col overflow-hidden rounded-t-lg rounded-b-md border border-[#e4f0fc] bg-[linear-gradient(to_bottom,#a4b8dc_10%,#cfe0f2_37%,#6298d8_38%,#66a4e4_60%,#3f88d4)] shadow-[0_0_0_1px_rgba(10,30,60,0.75),0_2px_12px_3px_rgba(0,10,40,0.7)]"
  >
    <header className="relative px-[6px] pb-[6px]">
      <Glass />
      <div className="flex h-[34px] items-start justify-end pr-[1px]">
        <CaptionButtons />
      </div>
      <AddressRow />
    </header>
    <div className="mx-[5px] mb-[7px] flex min-h-0 flex-1 flex-col border border-[#4d6f9c] bg-white">
      <Toolbar />
      <div className="flex min-h-0 flex-1">
        <NavigationPane />
        <LibraryPane />
      </div>
      <footer className="flex h-[51px] shrink-0 gap-[14px] border-t border-[#ccd5e2] bg-[#f1f5fb] pl-[17px] text-[#1e395b]">
        <LibrariesIcon className="mt-[2px] h-[46px] w-12 shrink-0" />
        <p className="pt-[7px]">4 items</p>
      </footer>
    </div>
  </section>
);

// only the top strip of this one shows above the active window
const BackgroundWindow = () => (
  <div className="absolute top-[1px] right-[85px] bottom-[37px] left-[15px] rounded-lg border border-[#bcd4ee] bg-linear-to-r from-[#7c9cc8] via-[#2c68b0] via-30% to-[#5c84b8] shadow-[0_0_0_1px_rgba(10,30,60,0.7),0_2px_10px_2px_rgba(0,10,40,0.6)]">
    <div className="flex justify-end pr-[7px]">
      <CaptionButtons />
    </div>
  </div>
);

const Taskbar = () => (
  <footer className="absolute inset-x-0 bottom-0 flex h-[39px] items-stretch border-t border-[#7fc0f4] bg-[#0a84f4]/40 shadow-[0_-1px_0_rgba(10,50,110,0.8)]">
    <button type="button" aria-label="Start" className="flex w-[54px] items-center justify-center">
      <StartOrb className="size-[38px]" />
    </button>
    <button type="button" aria-label="Internet Explorer" className="ml-[3px] flex w-[62px] items-center justify-center">
      <ExplorerE className="size-8" />
    </button>
    <div className="flex w-[59px] gap-[1px]">
      <button
        type="button"
        aria-label="Windows Explorer"
        className="flex flex-1 items-center justify-center rounded-xs border border-[#dcecfa] bg-linear-to-br from-[#c8d8e8]/90 via-[#8cb4dc]/80 to-[#b4d4f0]/80 pl-1 shadow-[0_0_0_1px_rgba(16,50,96,0.8)]"
      >
        <LibrariesIcon className="size-8" />
      </button>
      <span className="w-1 rounded-r-xs border border-[#a4d0f4] bg-[#4c94d8]/60" />
    </div>
    <button type="button" aria-label="Windows Media Player" className="flex w-[61px] items-center justify-center">
      <MediaPlayerIcon className="h-6 w-[26px]" />
    </button>
    <button type="button" aria-label="Google Chrome" className="flex w-[66px] items-center justify-center">
      <ChromeIcon className="size-8" />
    </button>
    <div className="ml-auto flex items-center gap-2 opacity-80">
      <button type="button" aria-label="Show hidden icons" className="mr-[5px] rotate-180 text-[#b4dcff]">
        <DownArrow className="h-1 w-2" />
      </button>
      <ActionCenterIcon className="size-4" />
      <NetworkTrayIcon className="size-4" />
      <VolumeIcon className="size-4" />
    </div>
    <p className="w-[79px] pt-[3px] pl-[5px] text-center leading-[17px] text-[#8cc6ff]">
      11:03 AM
      <br />
      11/27/2023
    </p>
    <button
      type="button"
      aria-label="Show desktop"
      className="w-[14px] border-l border-[#4c98e4] bg-linear-to-br from-[#1a5cb0] to-[#0868c8] shadow-[inset_1px_0_0_rgba(10,40,90,0.6)]"
    />
  </footer>
);

const MousePointer = () => (
  <svg viewBox="0 0 12 20" className="pointer-events-none absolute top-[10px] left-[819px] h-5 w-3" aria-hidden="true">
    <path d="M.6 1v15.500l3.600-3.500 2.400 5.800 2.300-1-2.400-5.600h5z" fill="#fff" stroke="#000" strokeWidth="0.9" />
  </svg>
);

export default function App() {
  return (
    <div className="relative h-screen min-h-[480px] w-full overflow-hidden bg-[#0058c0] font-['Open_Sans','Noto_Sans',sans-serif] text-[12px] leading-4 text-black">
      <SharedGradients />
      <Wallpaper />
      <a
        href="#recycle-bin"
        className="absolute right-[9px] bottom-[70px] flex w-20 flex-col items-center gap-[5px] text-white [text-shadow:1px_1px_2px_#000,0_0_2px_#000,1px_1px_3px_#000]"
      >
        <RecycleBinIcon className="h-[46px] w-[38px]" />
        <span className="whitespace-nowrap">Recycle Bin</span>
      </a>
      <BackgroundWindow />
      <ExplorerWindow />
      <Taskbar />
      <MousePointer />
    </div>
  );
}
